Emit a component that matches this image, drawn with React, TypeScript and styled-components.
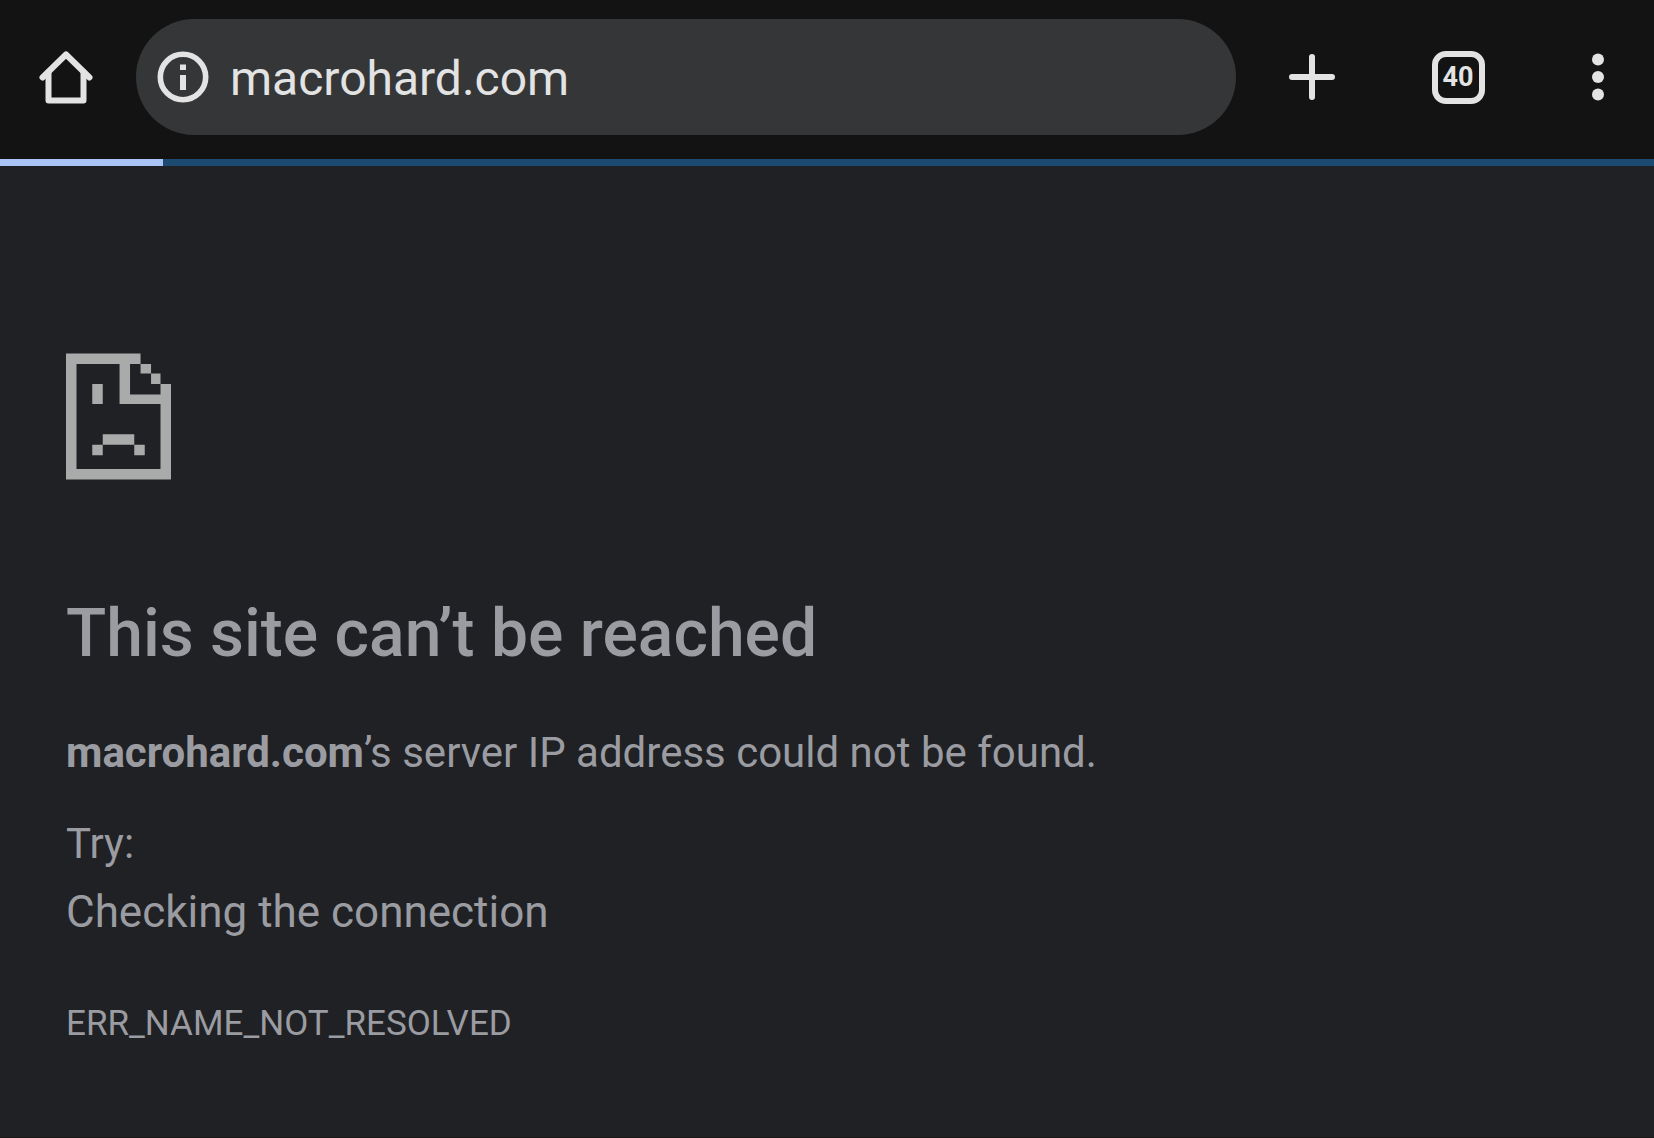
import React from "react";
import styled, { createGlobalStyle } from "styled-components";

const GlobalStyle = createGlobalStyle`
  *, *::before, *::after { box-sizing: border-box; }
  body {
    margin: 0;
    background: #202124;
    font-family: Roboto, "Liberation Sans", sans-serif;
  }
`;

const Page = styled.div`
  display: flex;
  flex-direction: column;
  min-height: 100vh;
  border-bottom: 1px solid #1b1517;
  color: #9a9ca2;
`;

const Toolbar = styled.header`
  display: flex;
  align-items: center;
  padding: 19px 0 24px;
  background: #131313;
  color: #e3e3e3;
`;

const IconButton = styled.button<{ $width: number; $indent?: number }>`
  display: flex;
  flex: none;
  align-items: center;
  justify-content: center;
  width: ${(p) => p.$width}px;
  height: 112px;
  margin: 0 0 0 ${(p) => p.$indent ?? 0}px;
  padding: 0;
  border: 0;
  background: none;
  color: inherit;
  font: inherit;
  cursor: pointer;
`;

const AddressBar = styled.form`
  display: flex;
  flex: 1;
  align-items: center;
  min-width: 0;
  height: 116px;
  margin-left: 4px;
  padding-right: 48px;
  border-radius: 58px;
  background: #353638;
`;

const AddressInput = styled.input`
  flex: 1;
  min-width: 0;
  height: 66px;
  padding: 2px 0 0;
  border: 0;
  outline: 0;
  background: none;
  color: inherit;
  font: 400 48px/64px Roboto, "Liberation Sans", sans-serif;
`;

const TabCount = styled.span`
  display: flex;
  align-items: center;
  justify-content: center;
  width: 53px;
  height: 53px;
  border: 6px solid currentColor;
  border-radius: 14px;
  font-size: 27px;
  font-weight: 700;
  line-height: 32px;
`;

const Progress = styled.div`
  height: 7px;
  background: #1c4a70;
`;

const ProgressFill = styled.div`
  height: 100%;
  background: #abc4f8;
`;

const ErrorPage = styled.main`
  padding: 187px 66px 60px;
`;

const Heading = styled.h1`
  margin: 114px 0 0;
  font-size: 66px;
  font-weight: 500;
  line-height: 80px;
`;

const Paragraph = styled.p`
  margin: 0;
  font-size: 42px;
  line-height: 64px;
`;

const Summary = styled(Paragraph)`
  margin: 47px 0 27px;
`;

const Suggestions = styled.ul`
  margin: 0;
  padding: 0;
  list-style: none;
  font-size: 44px;
  line-height: 72px;
`;

const ErrorCode = styled.div`
  margin-top: 52px;
  font-size: 35px;
  line-height: 48px;
`;

const HomeIcon = () => (
  <svg width="54" height="54" viewBox="0 0 54 54" fill="none" stroke="currentColor" strokeWidth="6" strokeLinecap="round" strokeLinejoin="round" aria-hidden="true">
    <path d="M3.500 27.500L27 4.500L50.500 27.500" />
    <path d="M9.500 22V50.500H44.500V22" />
  </svg>
);

const InfoIcon = () => (
  <svg width="52" height="52" viewBox="0 0 52 52" aria-hidden="true">
    <circle cx="26" cy="26" r="22.700" fill="none" stroke="currentColor" strokeWidth="5.600" />
    <path d="M23 13.500h6v5.500h-6zM23 24h6v15h-6z" fill="currentColor" />
  </svg>
);

const PlusIcon = () => (
  <svg width="48" height="48" viewBox="0 0 48 48" stroke="currentColor" strokeWidth="6" strokeLinecap="round" aria-hidden="true">
    <path d="M24 4V44M4 24H44" />
  </svg>
);

const MenuIcon = () => (
  <svg width="12" height="48" viewBox="0 0 12 48" fill="currentColor" aria-hidden="true">
    <circle cx="6" cy="6.500" r="6" />
    <circle cx="6" cy="24" r="6" />
    <circle cx="6" cy="41.500" r="6" />
  </svg>
);

/* Pixel-art page with a folded corner, drawn on a 10 x 12 grid. */
const SadPageIcon = styled(({ className }: { className?: string }) => (
  <svg className={className} viewBox="0 0 100 120" fill="currentColor" fillRule="evenodd" role="img" aria-label="Page unavailable">
    <path d="M0 0H71V10H61V39H90V29H100V120H0ZM10 10V110H90V48H51V10Z" />
    <path d="M71 10h10v9h-10zM81 19h9v10h-9zM25 29h10v19h-10zM35 77h30v10h-30zM25 87h10v10h-10zM65 87h10v10h-10z" />
  </svg>
))`
  display: block;
  width: 105px;
  height: 127px;
  color: #a9aaaa;
`;

export default function App() {
  const loaded = 9.85;
  return (
    <>
      <GlobalStyle />
      <Page>
        <Toolbar>
          <IconButton type="button" aria-label="Home" $width={132}>
            <HomeIcon />
          </IconButton>
          <AddressBar onSubmit={(e) => e.preventDefault()}>
            <IconButton type="button" aria-label="Site information" $width={94}>
              <InfoIcon />
            </IconButton>
            <AddressInput aria-label="Address" defaultValue="macrohard.com" spellCheck={false} />
          </AddressBar>
          <IconButton type="button" aria-label="New tab" $width={152}>
            <PlusIcon />
          </IconButton>
          <IconButton type="button" aria-label="Open tabs" $width={140}>
            <TabCount>40</TabCount>
          </IconButton>
          <IconButton type="button" aria-label="Menu" $width={112} $indent={14}>
            <MenuIcon />
          </IconButton>
        </Toolbar>
        <Progress role="progressbar" aria-label="Page loading" aria-valuenow={loaded}>
          <ProgressFill style={{ width: `${loaded}%` }} />
        </Progress>
        <ErrorPage>
          <SadPageIcon />
          <Heading>This site can’t be reached</Heading>
          <Summary>
            <strong>macrohard.com</strong>’s server IP address could not be found.
          </Summary>
          <Paragraph>Try:</Paragraph>
          <Suggestions>
            <li>Checking the connection</li>
          </Suggestions>
          <ErrorCode>ERR_NAME_NOT_RESOLVED</ErrorCode>
        </ErrorPage>
      </Page>
    </>
  );
}
